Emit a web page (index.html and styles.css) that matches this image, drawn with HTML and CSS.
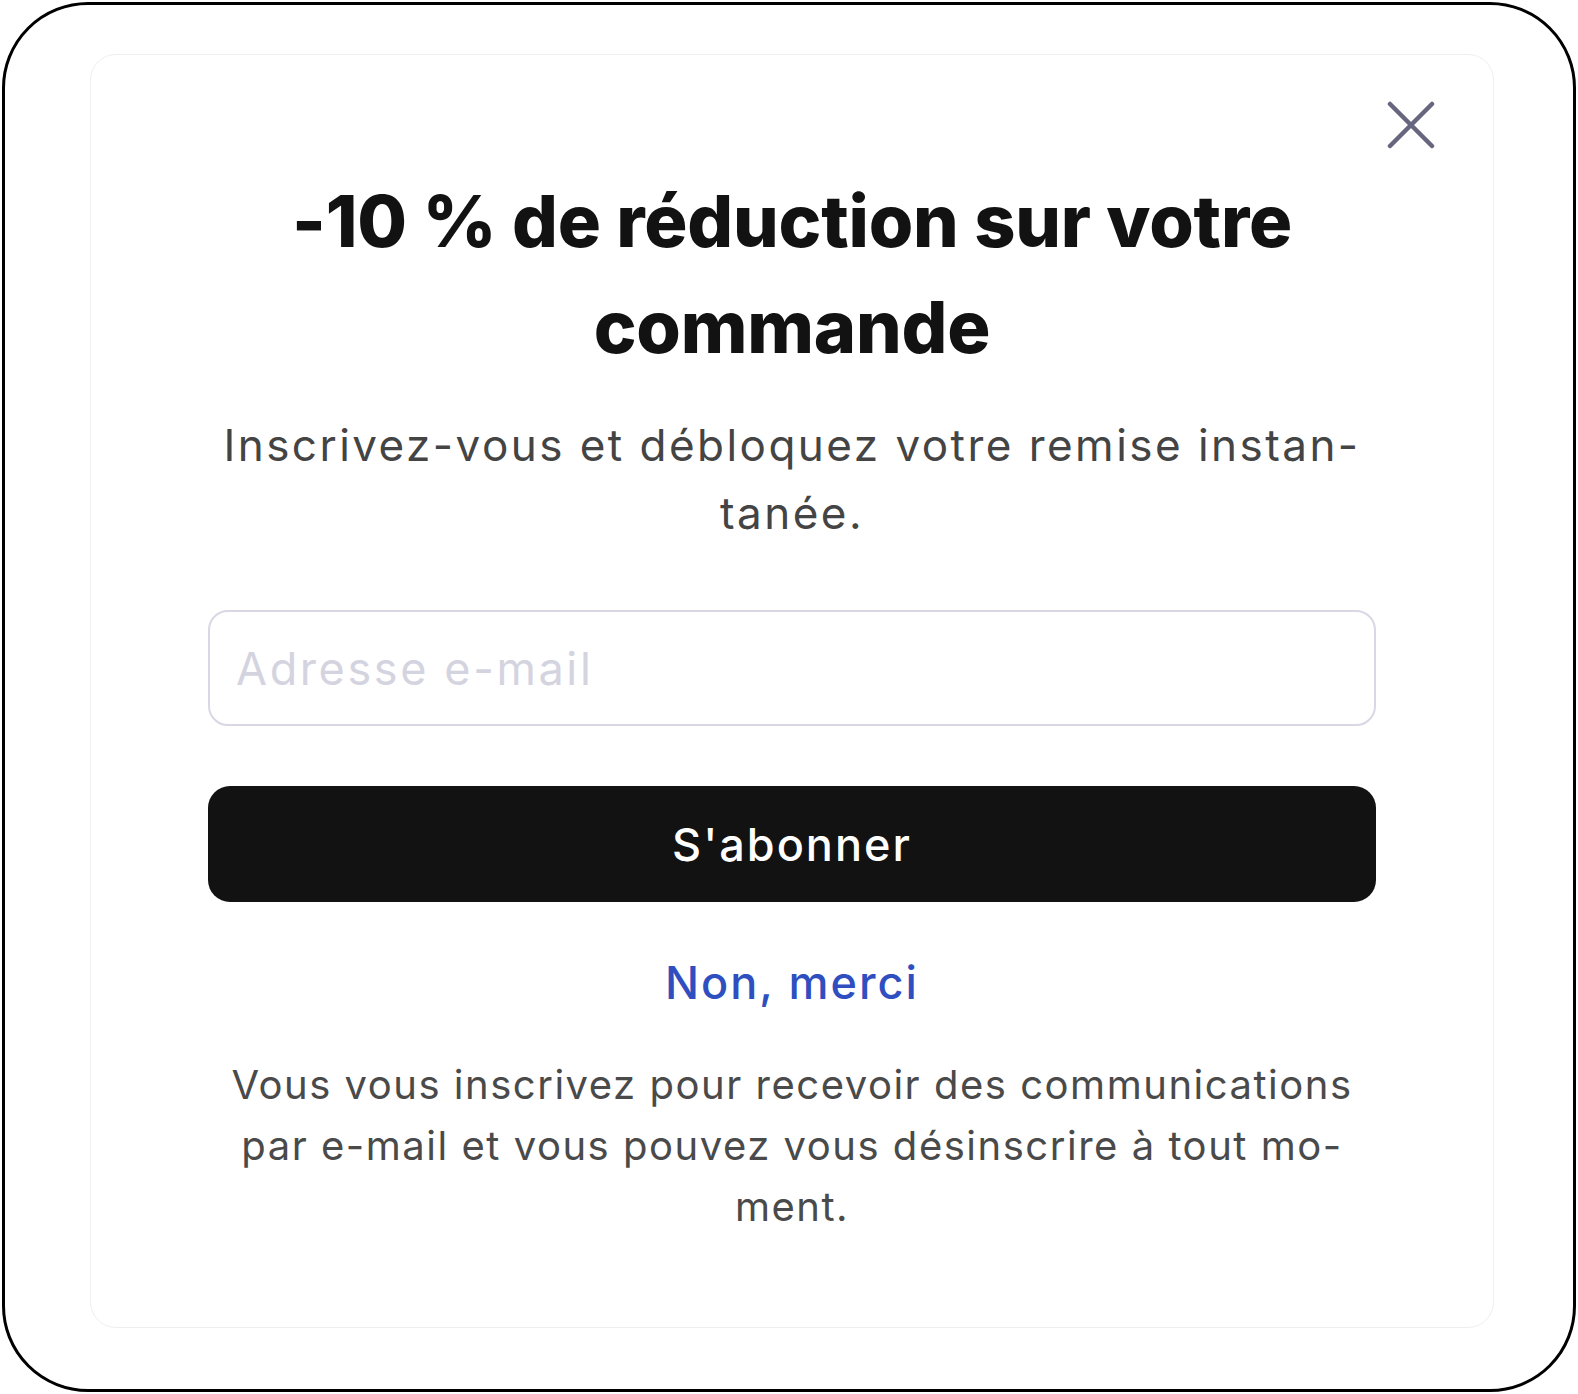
FILE: index.html
```html
<!DOCTYPE html>
<html lang="fr">
<head>
  <meta charset="UTF-8">
  <meta name="viewport" content="width=device-width, initial-scale=1.0">
  <title>Inscription newsletter</title>
  <link rel="stylesheet" href="styles.css">
</head>
<body>
  <div class="frame">
    <div class="card">
      <button class="close" aria-label="Fermer">
        <svg viewBox="0 0 48 48" width="48" height="48"><path d="M3 3 L45 45 M45 3 L3 45" stroke="#67667f" stroke-width="4.5" stroke-linecap="round" fill="none"/></svg>
      </button>
      <h1 class="title">-10 % de réduction sur votre<br>commande</h1>
      <p class="lead">Inscrivez-vous et débloquez votre remise instan-<br>tanée.</p>
      <form class="signup" onsubmit="return false">
        <input class="email" type="email" placeholder="Adresse e-mail">
        <button class="submit" type="submit">S'abonner</button>
      </form>
      <a class="decline" href="#">Non, merci</a>
      <p class="legal">Vous vous inscrivez pour recevoir des communications<br>par e-mail et vous pouvez vous désinscrire à tout mo-<br>ment.</p>
    </div>
  </div>
</body>
</html>
```

FILE: styles.css
```css
html, body { margin:0; padding:0; background:#fff; }
body { font-family:'Inter','Open Sans',sans-serif; color:#121212; }
.frame { box-sizing:border-box; height:1390px; margin:2px; border:3px solid #000; border-radius:86px; padding:49px 79px 60px 85px; }
.card { position:relative; box-sizing:border-box; height:1274px; border:1px solid #efeff1; border-radius:26px; padding:0 110px; display:flex; flex-direction:column; align-items:center; text-align:center; }
.close { position:absolute; top:46px; right:58px; padding:0; border:0; background:none; cursor:pointer; }
.close svg { display:block; }
.title { margin:113px 0 0; font-size:72px; line-height:106px; font-weight:800; letter-spacing:-0.2px; color:#121212; white-space:nowrap; }
.lead { margin:31px 0 0; font-size:44px; line-height:68px; font-weight:400; letter-spacing:0.056em; color:#444; white-space:nowrap; }
.signup { align-self:stretch; margin:63px 7px 0; display:flex; flex-direction:column; gap:60px; }
.email { box-sizing:border-box; height:116px; padding:0 26px; border:2px solid #d8d8e4; border-radius:20px; font-family:inherit; font-size:45px; letter-spacing:0.058em; color:#121212; background:#fff; outline:none; }
.email::placeholder { color:#d4d4e0; }
.submit { height:116px; border:0; border-radius:22px; background:#121212; color:#fff; font-family:inherit; font-size:45px; font-weight:500; letter-spacing:0.045em; cursor:pointer; }
.decline { margin-top:51px; font-size:45px; line-height:60px; font-weight:500; letter-spacing:0.045em; color:#2f4fc0; text-decoration:none; }
.legal { margin:41px 0 0; font-size:40px; line-height:61px; letter-spacing:0.038em; color:#4a4a4a; white-space:nowrap; }
```
